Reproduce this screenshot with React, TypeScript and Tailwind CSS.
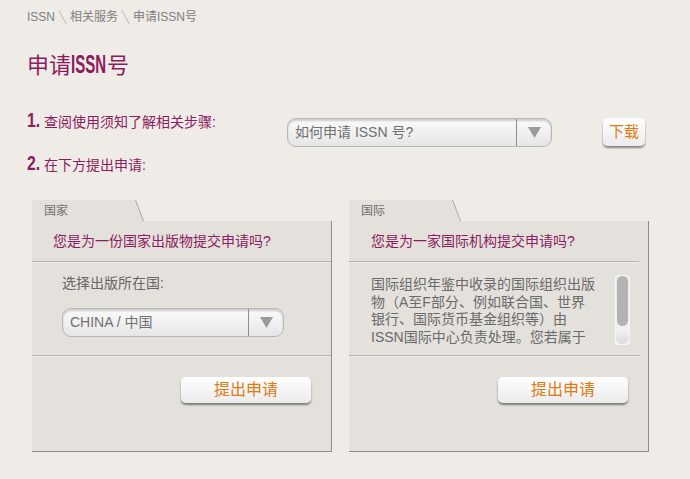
import React from "react";

const CJK = "font-['Liberation_Sans','Noto_Sans_CJK_SC',sans-serif]";

function Slash() {
  return <span className="mx-[7px] inline-block h-[16px] w-[1px] rotate-[-28deg] bg-[#c4c0bb]" />;
}

function Arrow() {
  return (
    <svg width="13" height="11" viewBox="0 0 13 11">
      <polygon points="0,0 13,0 6.5,11" fill="#9b9b9b" />
    </svg>
  );
}

function Select({ text, w, sep }: { text: string; w: string; sep: string }) {
  return (
    <div
      className={`flex h-[29px] ${w} items-stretch rounded-[9px] border border-[#b9b7b4] bg-gradient-to-b from-[#fbfbfb] to-[#e6e6e6] shadow-[inset_0_2px_2px_rgba(0,0,0,0.18)]`}
    >
      <div className="flex flex-1 items-center pl-[7px] text-[14px] text-[#707070]">{text}</div>
      <div className={`flex ${sep} items-center justify-center border-l border-[#8e8e8e]`}>
        <Arrow />
      </div>
    </div>
  );
}

function Button({ label, cls }: { label: string; cls: string }) {
  return (
    <div
      className={`flex ${cls} items-center justify-center rounded-[5px] bg-gradient-to-b from-[#ffffff] to-[#ebebeb] text-[#e07a14] shadow-[0_2px_2px_rgba(0,0,0,0.45)]`}
    >
      {label}
    </div>
  );
}

function Divider({ inset }: { inset?: boolean }) {
  return <div className={`h-[2px] border-t border-b border-t-[#b4b1ad] border-b-[#f3f1ee] ${inset ? "mr-[9px]" : ""}`} />;
}

function Panel({ tab, children }: { tab: string; children: React.ReactNode }) {
  return (
    <div className="flex w-[300px] flex-col">
      <div className="flex h-[21px]">
        <div className="flex w-[103px] items-center bg-[#e4e1dc] pl-[12px] text-[12px] text-[#6e6e6e]">{tab}</div>
        <svg width="9" height="21" viewBox="0 0 9 21" className="block">
          <polygon points="0,0 0.5,0 8.5,21 0,21" fill="#e4e1dc" />
          <line x1="0.5" y1="0" x2="8.5" y2="21" stroke="#a9a6a2" strokeWidth="1" />
        </svg>
      </div>
      <div className="flex h-[231px] flex-col border-r border-b border-[#8f8c88] bg-[#e4e1dc]">{children}</div>
    </div>
  );
}

function Num({ n }: { n: string }) {
  return (
    <span className="inline-block w-[17px]">
      <span className="inline-block origin-left scale-x-[0.75] text-[21px] font-bold leading-[24px]">{n}</span>
    </span>
  );
}

export default function App() {
  return (
    <div className={`h-[479px] w-[690px] overflow-hidden bg-[#efebe7] ${CJK}`}>
      <nav className="ml-[27px] mt-[9px] flex h-[16px] items-center text-[12px] text-[#808080]">
        <span>ISSN</span>
        <Slash />
        <span>相关服务</span>
        <Slash />
        <span>申请ISSN号</span>
      </nav>

      <h1 className="ml-[27px] mt-[26px] flex h-[26px] items-baseline text-[22px] leading-[26px] text-[#8b1c5e]">
        <span>申请</span>
        <span className="inline-block w-[36px]">
          <span className="inline-block origin-left scale-x-[0.6] whitespace-nowrap text-[25px] font-bold leading-[26px]">ISSN</span>
        </span>
        <span>号</span>
      </h1>

      <div className="ml-[27px] mt-[31px] flex">
        <div className="flex w-[260px] flex-col gap-[19px]">
          <div className="flex h-[24px] items-baseline text-[#8b1c5e]">
            <Num n="1." />
            <span className="text-[14px]">查阅使用须知了解相关步骤:</span>
          </div>
          <div className="flex h-[24px] items-baseline text-[#8b1c5e]">
            <Num n="2." />
            <span className="text-[14px]">在下方提出申请:</span>
          </div>
        </div>
        <div className="mt-[10px]">
          <Select text="如何申请 ISSN 号?" w="w-[265px]" sep="w-[35px]" />
        </div>
        <div className="ml-[51px] mt-[10px]">
          <Button label="下载" cls="h-[28px] w-[42px] text-[15px]" />
        </div>
      </div>

      <div className="ml-[32px] mt-[25px] flex gap-[17px]">
        <Panel tab="国家">
          <div className="flex h-[40px] items-center pl-[21px] text-[14px] text-[#8b1c5e]">您是为一份国家出版物提交申请吗?</div>
          <Divider />
          <div className="flex h-[92px] flex-col pl-[30px] pt-[11px]">
            <div className="h-[18px] text-[14px] leading-[18px] text-[#666]">选择出版所在国:</div>
            <div className="mt-[16px]">
              <Select text="CHINA / 中国" w="w-[222px]" sep="w-[35px]" />
            </div>
          </div>
          <Divider />
          <div className="flex justify-end pr-[20px] pt-[20px]">
            <Button label="提出申请" cls="h-[26px] w-[130px] text-[16px]" />
          </div>
        </Panel>

        <Panel tab="国际">
          <div className="flex h-[40px] items-center pl-[22px] text-[14px] text-[#8b1c5e]">您是为一家国际机构提交申请吗?</div>
          <Divider inset />
          <div className="flex h-[92px] pl-[22px] pt-[12px]">
            <div className="h-[71px] w-[244px] overflow-hidden whitespace-nowrap pt-[1px] text-[14px] leading-[17.5px] text-[#6a6a6a]">
              <div>国际组织年鉴中收录的国际组织出版</div>
              <div>物（A至F部分、例如联合国、世界</div>
              <div>银行、国际货币基金组织等）由</div>
              <div>ISSN国际中心负责处理。您若属于</div>
              <div>上述情况（如需了解详情），请点</div>
            </div>
            <div className="flex h-[70px] w-[15px] flex-col rounded-[3px] border border-[#f7f7f7] bg-gradient-to-b from-[#e8e8e8] to-[#f4f4f4]">
              <div className="mx-[1px] h-[50px] rounded-full bg-[#b3b3b3]" />
              <div className="mt-[4px] flex-1 rounded-b-[6px] bg-gradient-to-b from-[#f0f0f0] to-[#dcdcdc]" />
            </div>
          </div>
          <Divider inset />
          <div className="flex justify-end pr-[20px] pt-[20px]">
            <Button label="提出申请" cls="h-[26px] w-[130px] text-[16px]" />
          </div>
        </Panel>
      </div>
    </div>
  );
}
